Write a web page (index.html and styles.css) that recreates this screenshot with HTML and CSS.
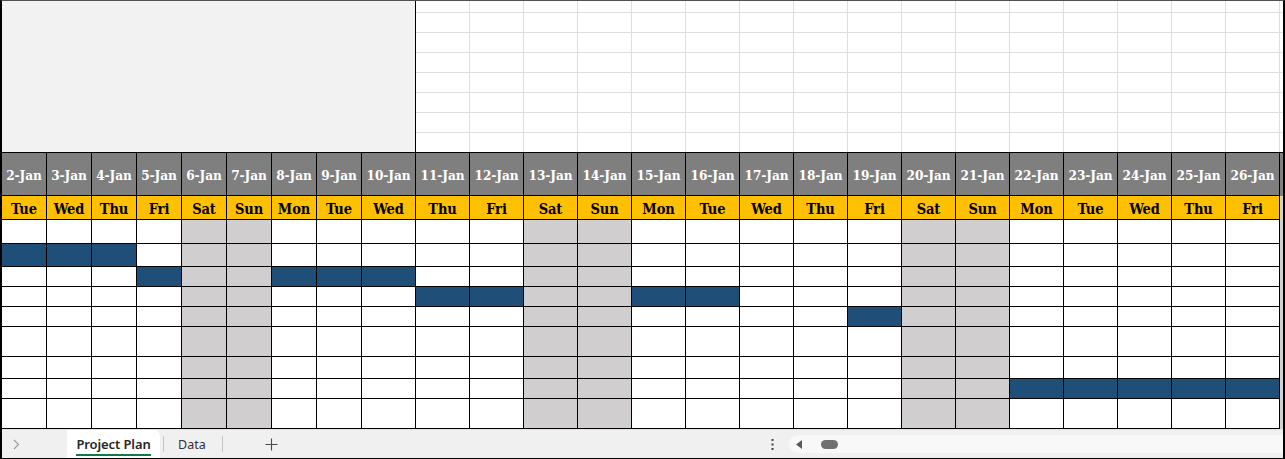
FILE: index.html
```html
<!DOCTYPE html>
<html lang="en">
<head>
<meta charset="utf-8">
<title>Project Plan</title>
<link rel="stylesheet" href="styles.css">
</head>
<body>
<div class="window">
  <div class="sheet">
    <div class="top">
      <div class="merged"></div>
      <div class="top-grid"></div>
    </div>

    <div class="row dates">
      <div class="c">2-Jan</div><div class="c">3-Jan</div><div class="c">4-Jan</div><div class="c">5-Jan</div><div class="c">6-Jan</div><div class="c">7-Jan</div><div class="c">8-Jan</div><div class="c">9-Jan</div><div class="c">10-Jan</div><div class="c">11-Jan</div><div class="c">12-Jan</div><div class="c">13-Jan</div><div class="c">14-Jan</div><div class="c">15-Jan</div><div class="c">16-Jan</div><div class="c">17-Jan</div><div class="c">18-Jan</div><div class="c">19-Jan</div><div class="c">20-Jan</div><div class="c">21-Jan</div><div class="c">22-Jan</div><div class="c">23-Jan</div><div class="c">24-Jan</div><div class="c">25-Jan</div><div class="c">26-Jan</div><div class="edge"></div>
    </div>

    <div class="row days">
      <div class="c">Tue</div><div class="c">Wed</div><div class="c">Thu</div><div class="c">Fri</div><div class="c">Sat</div><div class="c">Sun</div><div class="c">Mon</div><div class="c">Tue</div><div class="c">Wed</div><div class="c">Thu</div><div class="c">Fri</div><div class="c">Sat</div><div class="c">Sun</div><div class="c">Mon</div><div class="c">Tue</div><div class="c">Wed</div><div class="c">Thu</div><div class="c">Fri</div><div class="c">Sat</div><div class="c">Sun</div><div class="c">Mon</div><div class="c">Tue</div><div class="c">Wed</div><div class="c">Thu</div><div class="c">Fri</div><div class="edge"></div>
    </div>

    <div class="row h24">
      <div class="c"></div><div class="c"></div><div class="c"></div><div class="c"></div><div class="c we"></div><div class="c we"></div><div class="c"></div><div class="c"></div><div class="c"></div><div class="c"></div><div class="c"></div><div class="c we"></div><div class="c we"></div><div class="c"></div><div class="c"></div><div class="c"></div><div class="c"></div><div class="c"></div><div class="c we"></div><div class="c we"></div><div class="c"></div><div class="c"></div><div class="c"></div><div class="c"></div><div class="c"></div><div class="edge"></div>
    </div>

    <div class="row h23">
      <div class="c bar"></div><div class="c bar"></div><div class="c bar"></div><div class="c"></div><div class="c we"></div><div class="c we"></div><div class="c"></div><div class="c"></div><div class="c"></div><div class="c"></div><div class="c"></div><div class="c we"></div><div class="c we"></div><div class="c"></div><div class="c"></div><div class="c"></div><div class="c"></div><div class="c"></div><div class="c we"></div><div class="c we"></div><div class="c"></div><div class="c"></div><div class="c"></div><div class="c"></div><div class="c"></div><div class="edge"></div>
    </div>

    <div class="row h20">
      <div class="c"></div><div class="c"></div><div class="c"></div><div class="c bar"></div><div class="c we"></div><div class="c we"></div><div class="c bar"></div><div class="c bar"></div><div class="c bar"></div><div class="c"></div><div class="c"></div><div class="c we"></div><div class="c we"></div><div class="c"></div><div class="c"></div><div class="c"></div><div class="c"></div><div class="c"></div><div class="c we"></div><div class="c we"></div><div class="c"></div><div class="c"></div><div class="c"></div><div class="c"></div><div class="c"></div><div class="edge"></div>
    </div>

    <div class="row h20">
      <div class="c"></div><div class="c"></div><div class="c"></div><div class="c"></div><div class="c we"></div><div class="c we"></div><div class="c"></div><div class="c"></div><div class="c"></div><div class="c bar"></div><div class="c bar"></div><div class="c we"></div><div class="c we"></div><div class="c bar"></div><div class="c bar"></div><div class="c"></div><div class="c"></div><div class="c"></div><div class="c we"></div><div class="c we"></div><div class="c"></div><div class="c"></div><div class="c"></div><div class="c"></div><div class="c"></div><div class="edge"></div>
    </div>

    <div class="row h20">
      <div class="c"></div><div class="c"></div><div class="c"></div><div class="c"></div><div class="c we"></div><div class="c we"></div><div class="c"></div><div class="c"></div><div class="c"></div><div class="c"></div><div class="c"></div><div class="c we"></div><div class="c we"></div><div class="c"></div><div class="c"></div><div class="c"></div><div class="c"></div><div class="c bar"></div><div class="c we"></div><div class="c we"></div><div class="c"></div><div class="c"></div><div class="c"></div><div class="c"></div><div class="c"></div><div class="edge"></div>
    </div>

    <div class="row h30">
      <div class="c"></div><div class="c"></div><div class="c"></div><div class="c"></div><div class="c we"></div><div class="c we"></div><div class="c"></div><div class="c"></div><div class="c"></div><div class="c"></div><div class="c"></div><div class="c we"></div><div class="c we"></div><div class="c"></div><div class="c"></div><div class="c"></div><div class="c"></div><div class="c"></div><div class="c we"></div><div class="c we"></div><div class="c"></div><div class="c"></div><div class="c"></div><div class="c"></div><div class="c"></div><div class="edge"></div>
    </div>

    <div class="row h22">
      <div class="c"></div><div class="c"></div><div class="c"></div><div class="c"></div><div class="c we"></div><div class="c we"></div><div class="c"></div><div class="c"></div><div class="c"></div><div class="c"></div><div class="c"></div><div class="c we"></div><div class="c we"></div><div class="c"></div><div class="c"></div><div class="c"></div><div class="c"></div><div class="c"></div><div class="c we"></div><div class="c we"></div><div class="c"></div><div class="c"></div><div class="c"></div><div class="c"></div><div class="c"></div><div class="edge"></div>
    </div>

    <div class="row h20">
      <div class="c"></div><div class="c"></div><div class="c"></div><div class="c"></div><div class="c we"></div><div class="c we"></div><div class="c"></div><div class="c"></div><div class="c"></div><div class="c"></div><div class="c"></div><div class="c we"></div><div class="c we"></div><div class="c"></div><div class="c"></div><div class="c"></div><div class="c"></div><div class="c"></div><div class="c we"></div><div class="c we"></div><div class="c bar"></div><div class="c bar"></div><div class="c bar"></div><div class="c bar"></div><div class="c bar"></div><div class="edge"></div>
    </div>

    <div class="row h30">
      <div class="c"></div><div class="c"></div><div class="c"></div><div class="c"></div><div class="c we"></div><div class="c we"></div><div class="c"></div><div class="c"></div><div class="c"></div><div class="c"></div><div class="c"></div><div class="c we"></div><div class="c we"></div><div class="c"></div><div class="c"></div><div class="c"></div><div class="c"></div><div class="c"></div><div class="c we"></div><div class="c we"></div><div class="c"></div><div class="c"></div><div class="c"></div><div class="c"></div><div class="c"></div><div class="edge"></div>
    </div>
  </div>

  <div class="tabbar">
    <div class="chev">
      <svg width="7" height="11" viewBox="0 0 7 11"><polyline points="1,1 5.5,5.5 1,10" fill="none" stroke="#9a9a9a" stroke-width="1.1"/></svg>
    </div>
    <div class="tab active"><span class="tab-label">Project Plan</span></div>
    <div class="sep"></div>
    <div class="tab plain">Data</div>
    <div class="sep sep2"></div>
    <div class="plus">
      <svg width="13" height="13" viewBox="0 0 13 13"><path d="M6.5 0.5V12.5M0.5 6.5H12.5" stroke="#4a4a4a" stroke-width="1.1" fill="none"/></svg>
    </div>
    <div class="spacer"></div>
    <div class="dots">
      <svg width="3" height="11" viewBox="0 0 3 11"><rect x="0.5" y="0" width="2" height="2" fill="#444"/><rect x="0.5" y="4.5" width="2" height="2" fill="#444"/><rect x="0.5" y="9" width="2" height="2" fill="#444"/></svg>
    </div>
    <div class="scroll">
      <svg class="arrow" width="6" height="9" viewBox="0 0 6 9"><path d="M6 0V9L0 4.5Z" fill="#5a5a5a"/></svg>
      <div class="thumb"></div>
    </div>
  </div>
</div>
</body>
</html>
```

FILE: styles.css
```css
* { box-sizing: border-box; }

html, body {
  margin: 0;
  padding: 0;
  background: #ffffff;
}

.window {
  width: 1285px;
  height: 459px;
  border-top: 1px solid #505050;
  border-left: 2px solid #000;
  border-right: 2px solid #000;
  border-bottom: 1px solid #000;
  display: flex;
  flex-direction: column;
  overflow: hidden;
}

.sheet {
  height: 428px;
  overflow: hidden;
  flex: none;
}

/* top empty area */
.top {
  display: flex;
  height: 152px;
  border-bottom: 1px solid #000;
}

.merged {
  width: 414px;
  flex: none;
  background: #f2f2f2;
  border-right: 1px solid #000;
}

.top-grid {
  flex: 1;
  background-color: #fff;
  background-image:
    linear-gradient(to right, transparent 53px, #dedede 53px),
    linear-gradient(to bottom, transparent 19px, #dedede 19px);
  background-size: 54px 100%, 100% 20px;
  background-position: 0 0, 0 -8px;
}

/* table rows */
.row {
  display: grid;
  grid-template-columns: repeat(8, 45px) repeat(17, 54px) 3px;
}

.c {
  border-right: 1px solid #000;
  border-bottom: 1px solid #000;
  background: #fff;
  display: flex;
  align-items: center;
  justify-content: center;
  font-family: "DejaVu Serif Condensed", "DejaVu Serif", serif;
  font-stretch: condensed;
  font-weight: bold;
  font-size: 13.5px;
  letter-spacing: -0.1px;
  white-space: nowrap;
  overflow: hidden;
}

.edge {
  background: #cfcfcf;
}

.dates { height: 43px; }
.dates .c {
  background: #7f7f7f;
  color: #ffffff;
  padding-top: 2px;
}
.dates .edge { background: #7f7f7f; }

.days { height: 24px; }
.days .c {
  background: #ffc000;
  color: #000;
  padding-top: 2px;
  font-size: 14.5px;
}

.h24 { height: 24px; }
.h23 { height: 23px; }
.h20 { height: 20px; }
.h22 { height: 22px; }
.h30 { height: 30px; }

.c.we { background: #d0cece; }
.c.bar { background: #1f4e79; }

/* sheet tab bar */
.tabbar {
  flex: 1;
  display: flex;
  align-items: center;
  background: #f0f0f0;
  border-top: 1px solid #e2e2e2;
  font-family: "Noto Sans", "Segoe UI", sans-serif;
  font-size: 13px;
  color: #262626;
}

.chev {
  width: 65px;
  flex: none;
  padding-left: 11px;
  display: flex;
  align-items: center;
  padding-top: 1px;
}

.tab.active {
  width: 93px;
  flex: none;
  align-self: stretch;
  background: #ffffff;
  border-radius: 0 6px 0 0;
  display: flex;
  align-items: center;
  justify-content: center;
}

.tab-label {
  font-weight: 600;
  font-size: 13px;
  line-height: 15px;
  padding-top: 4px;
  padding-bottom: 2px;
  border-bottom: 2px solid #107c41;
  color: #262626;
  letter-spacing: -0.1px;
}

.sep {
  width: 1px;
  height: 16px;
  background: #c6c6c6;
  margin-left: 3px;
  flex: none;
}

.tab.plain {
  margin-left: 14px;
  font-size: 12.5px;
  color: #333;
  padding-top: 1px;
}

.sep2 { margin-left: 16px; }

.plus {
  margin-left: 42px;
  display: flex;
  align-items: center;
}

.spacer { flex: 1; }

.dots {
  display: flex;
  align-items: center;
  margin-right: 15px;
  padding-top: 1px;
}

.scroll {
  width: 494px;
  flex: none;
  height: 18px;
  background: #f8f8f8;
  border-radius: 9px 0 0 9px;
  display: flex;
  align-items: center;
  padding-left: 7px;
}

.arrow { flex: none; }

.thumb {
  width: 17px;
  height: 9px;
  border-radius: 5px;
  background: #707070;
  margin-left: 19px;
}
```
